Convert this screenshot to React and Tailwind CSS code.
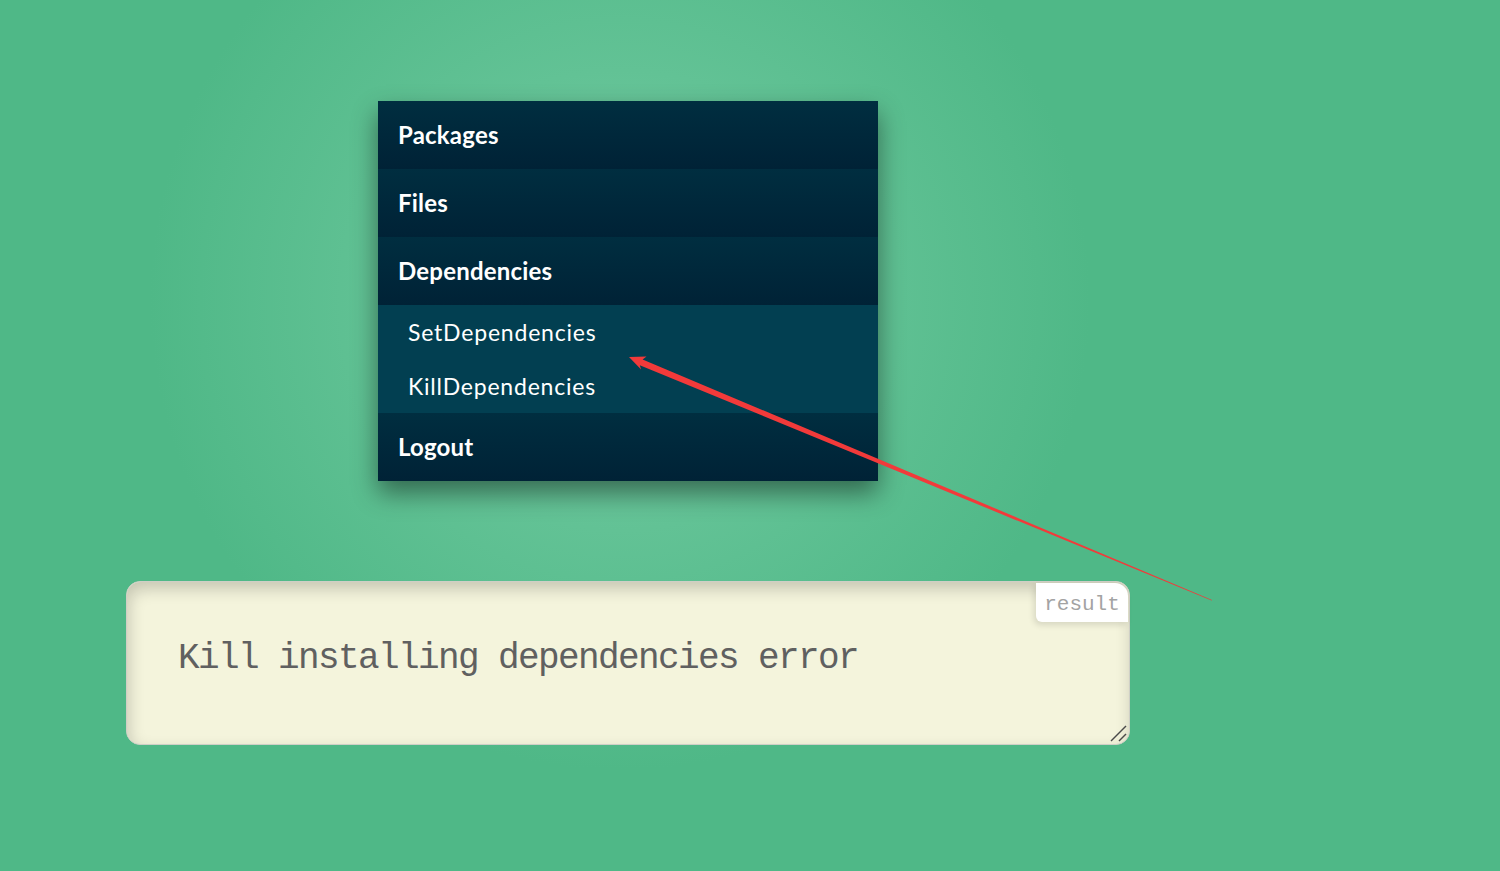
import React from 'react';

const menu = [
  { label: 'Packages' },
  { label: 'Files' },
  { label: 'Dependencies', children: ['SetDependencies', 'KillDependencies'] },
  { label: 'Logout' },
];

function Arrow() {
  // tapered annotation arrow, thin at the tail, head at the menu item
  return (
    <svg className="absolute left-0 top-0 pointer-events-none" width="1500" height="871">
      <polygon
        fill="#f23a3a"
        points="629,357 646.5,356.6 642.6,359.4 1212,600 1211.6,600.6 639.8,365.2 641.1,369.6"
      />
    </svg>
  );
}

function SideMenu() {
  return (
    <div className="w-[500px] ml-[378px] mt-[101px] shadow-[0_12px_24px_rgba(0,0,0,0.45)] font-['Lato','Noto_Sans',sans-serif] text-white">
      {menu.map(item => (
        <div key={item.label}>
          <div className="h-[68px] flex items-center pl-5 bg-gradient-to-b from-[#002e40] to-[#002236] text-[24px] font-bold tracking-[0.2px]">
            {item.label}
          </div>
          {item.children && (
            <div className="bg-[#023f51]">
              {item.children.map(child => (
                <div key={child} className="h-[54px] flex items-center pl-[30px] text-[23px] tracking-[0.8px]">
                  {child}
                </div>
              ))}
            </div>
          )}
        </div>
      ))}
    </div>
  );
}

function ResultBox() {
  return (
    <div className="relative ml-[126px] mt-[100px] w-[1004px] h-[164px] rounded-[14px] border border-[#cfcfc6] bg-[#f4f4dc] shadow-[inset_2px_7px_16px_rgba(0,0,0,0.19)]">
      <div className="pl-[51px] pt-[52px] font-['Liberation_Mono',monospace] text-[36px] leading-[50px] tracking-[-1.6px] text-[#606060]">
        Kill installing dependencies error
      </div>
      <div className="absolute right-[1px] top-[1px] w-[92px] h-[39px] flex items-center justify-center pt-[4px] bg-white rounded-bl-[6px] rounded-tr-[13px] shadow-[-2px_3px_6px_rgba(0,0,0,0.12)] font-['Liberation_Mono',monospace] text-[21px] text-[#a3a3a3]">
        result
      </div>
      <svg className="absolute right-[2px] bottom-[2px]" width="18" height="18" viewBox="0 0 18 18">
        <line x1="2" y1="17" x2="17" y2="2" stroke="#4a4a4a" strokeWidth="1.5" />
        <line x1="10" y1="17" x2="17" y2="10" stroke="#4a4a4a" strokeWidth="1.5" />
      </svg>
    </div>
  );
}

export default function App() {
  return (
    <div className="relative w-full h-[871px] overflow-hidden flex flex-col items-start bg-[#4fb887] bg-[radial-gradient(circle_at_620px_300px,#7acda7_0px,#62c295_230px,#4fb887_470px)]">
      <SideMenu />
      <ResultBox />
      <Arrow />
    </div>
  );
}
